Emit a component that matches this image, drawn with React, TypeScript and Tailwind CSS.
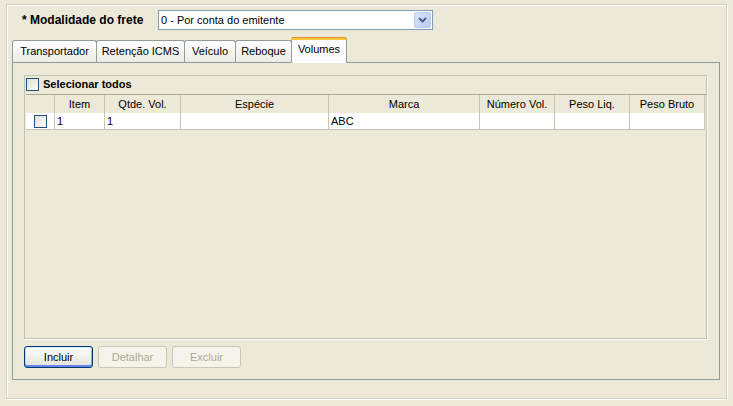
import React from "react";

const TABS = [
  { label: "Transportador", w: "w-[85px]" },
  { label: "Retenção ICMS", w: "w-[89px]" },
  { label: "Veículo", w: "w-[52px]" },
  { label: "Reboque", w: "w-[57px]" },
];

const COLUMNS = [
  { label: "", w: "w-[29px]" },
  { label: "Item", w: "w-[50px]" },
  { label: "Qtde. Vol.", w: "w-[76px]" },
  { label: "Espécie", w: "w-[148px]" },
  { label: "Marca", w: "w-[151px]" },
  { label: "Número Vol.", w: "w-[75px]" },
  { label: "Peso Liq.", w: "w-[75px]" },
  { label: "Peso Bruto", w: "w-[75px]" },
];

const ROW = ["", "1", "1", "", "ABC", "", "", ""];

function XpCheckbox() {
  return (
    <span className="inline-block w-[13px] h-[13px] border border-[#1C5180] bg-gradient-to-br from-[#DCDCD7] to-[#FFFFFF]" />
  );
}

function Button({ label, disabled }: { label: string; disabled?: boolean }) {
  if (disabled) {
    return (
      <div className="w-[69px] h-[22px] rounded-[3px] border border-[#C9C7BA] bg-[#F5F4EA] flex items-center justify-center text-[#ACA899]">
        {label}
      </div>
    );
  }
  return (
    <div className="w-[69px] h-[22px] rounded-[3px] border border-[#003C74] bg-gradient-to-b from-[#FFFFFF] to-[#E3E2DA] shadow-[inset_0_1px_0_#CEE7FF,inset_0_-2px_0_#6982EE,inset_1px_0_0_#BCD4F6,inset_-1px_0_0_#89ADE4] flex items-center justify-center text-black">
      {label}
    </div>
  );
}

export default function App() {
  return (
    <div
      className="w-[733px] h-[406px] bg-[#ECE9D8] pt-[4px] pl-[6px] text-[11px] text-black leading-none"
      style={{ fontFamily: "Tahoma, 'Liberation Sans', Arial, sans-serif" }}
    >
      <div className="w-[721px] h-[395px] border border-[#D0D0BF] shadow-[inset_1px_1px_0_#FFFFFF,1px_1px_0_#FFFFFF] pt-[5px] pl-[5px]">
        {/* frete */}
        <div className="flex items-center h-[20px]">
          <span className="ml-[10px] w-[136px] font-bold text-[12px]">* Modalidade do frete</span>
          <div className="w-[275px] h-[20px] border border-[#7F9DB9] bg-white flex items-center">
            <span className="flex-1 pl-[2px]">0 - Por conta do emitente</span>
            <span className="w-[17px] h-[16px] mr-[1px] rounded-[2px] border border-[#B9CAF3] bg-gradient-to-br from-[#DCE6FB] to-[#B6C9F5] flex items-center justify-center">
              <svg width="9" height="6" viewBox="0 0 9 6">
                <path d="M1 1 L4.5 4.5 L8 1" fill="none" stroke="#4D6185" strokeWidth="2" />
              </svg>
            </span>
          </div>
        </div>

        {/* tabs */}
        <div className="mt-[7px] flex items-end h-[25px]">
          {TABS.map((t) => (
            <div
              key={t.label}
              className={`${t.w} h-[22px] -mr-px border border-b-0 border-[#919B9C] rounded-t-[3px] bg-gradient-to-b from-[#FFFFFF] to-[#ECEBE6] flex items-center justify-center`}
            >
              {t.label}
            </div>
          ))}
          <div className="relative -mb-px w-[56px] h-[26px] border border-b-0 border-[#919B9C] rounded-t-[3px] bg-[#FCFCFE] flex items-start justify-center pt-[6px] z-10">
            <span className="absolute left-[-1px] right-[-1px] top-[-1px] h-[3px] rounded-t-[3px] bg-[#FFC83C] border-t border-[#E68B2C]" />
            Volumes
          </div>
        </div>

        {/* panel */}
        <div className="w-[708px] h-[318px] border border-[#919B9C] bg-[#ECE9D8] pt-[12px] pl-[11px]">
          <div className="w-[683px] h-[264px] border border-[#C5C2B2] shadow-[1px_1px_0_#FFFFFF] flex flex-col">
            <div className="flex items-center h-[16px] pl-[1px] pt-[1px] gap-[4px]">
              <XpCheckbox />
              <span className="font-bold">Selecionar todos</span>
            </div>
            <div className="mt-[2px] ml-[1px] border-t border-[#ACA899] flex h-[19px]">
              {COLUMNS.map((c, i) => (
                <div
                  key={i}
                  className={`${c.w} h-full flex items-center justify-center border-r border-[#C7C5B2]`}
                >
                  {c.label}
                </div>
              ))}
            </div>
            <div className="ml-[1px] flex h-[17px] bg-white border-b border-[#C7C5B2] w-[679px]">
              {ROW.map((v, i) => (
                <div
                  key={i}
                  className={`${COLUMNS[i].w} h-full border-r border-[#C7C5B2] flex items-center ${i === 0 ? "justify-center" : "pl-[2px]"}`}
                >
                  {i === 0 ? <XpCheckbox /> : v}
                </div>
              ))}
            </div>
          </div>

          <div className="mt-[7px] flex gap-[5px]">
            <Button label="Incluir" />
            <Button label="Detalhar" disabled />
            <Button label="Excluir" disabled />
          </div>
        </div>
      </div>
    </div>
  );
}
